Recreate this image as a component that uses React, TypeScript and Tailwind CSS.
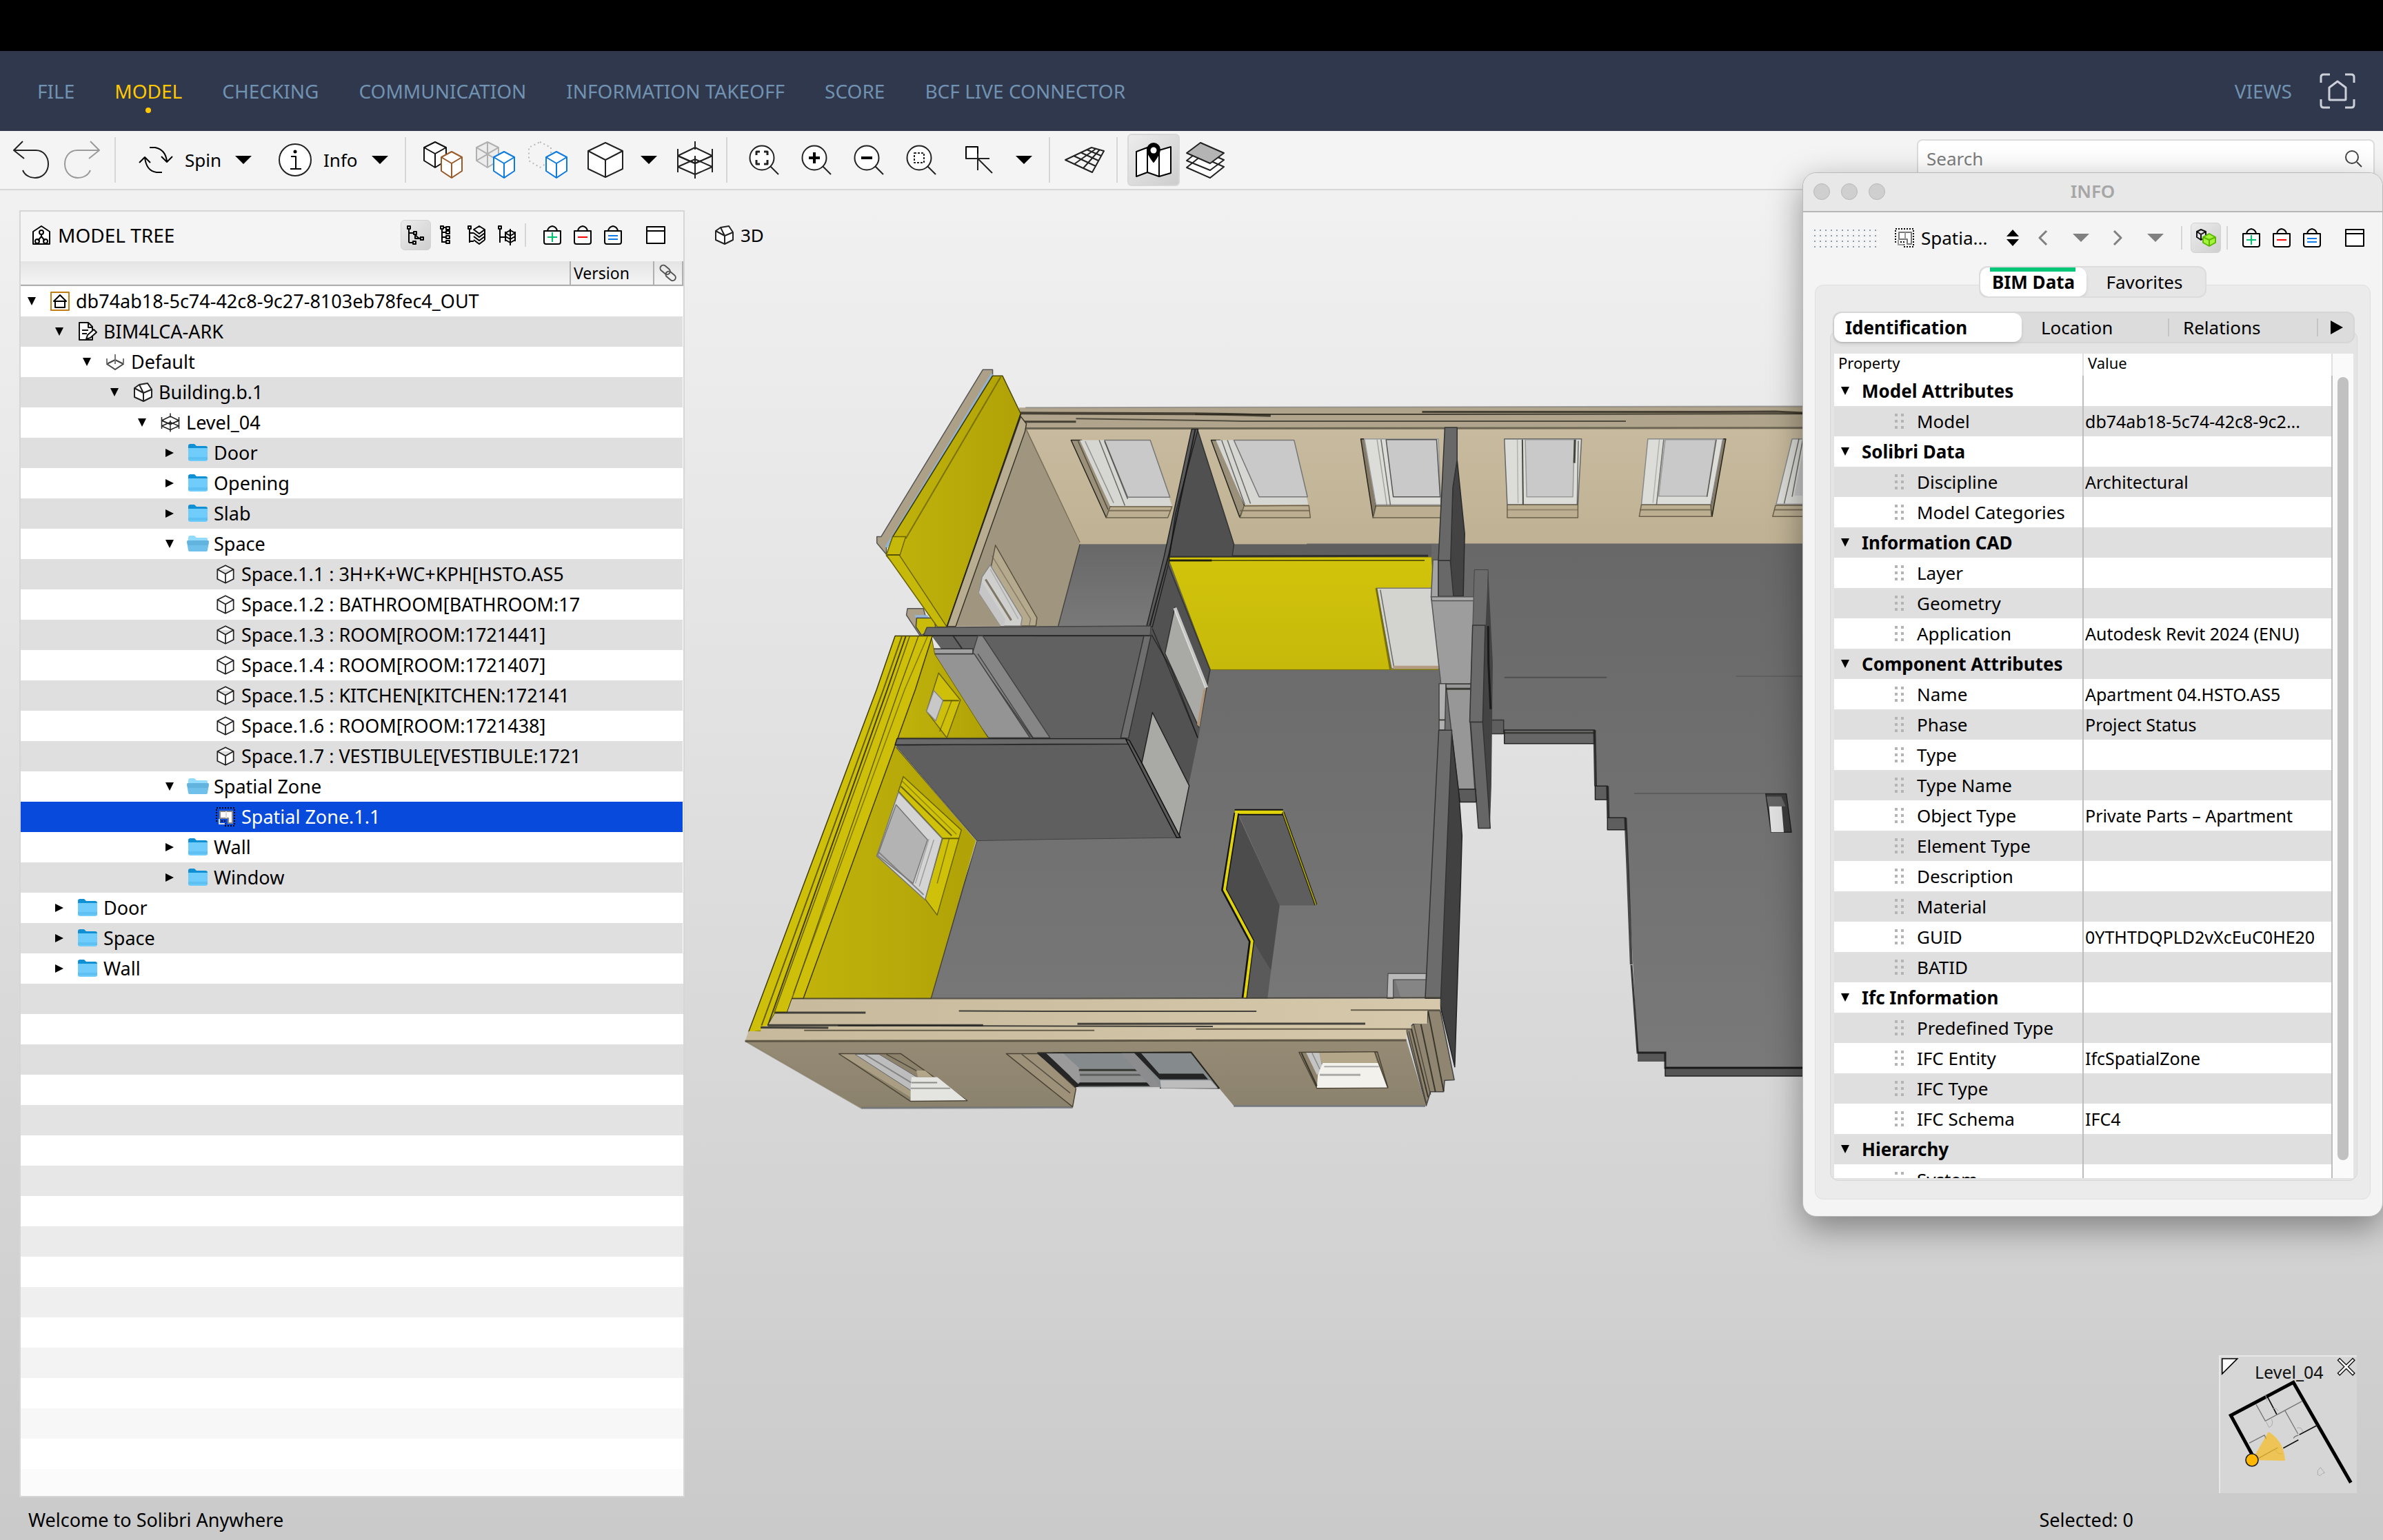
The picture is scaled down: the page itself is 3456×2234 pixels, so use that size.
import React from "react";

type Kids = { children?: React.ReactNode };

/* ---------- icons ---------- */

function Svg({ box, className, color = "#111", sw = 2, children }: Kids & { box: string; className: string; color?: string; sw?: number }) {
  return (
    <svg viewBox={box} className={"shrink-0 " + className} fill="none" stroke={color} strokeWidth={sw} strokeLinejoin="round" aria-hidden="true">
      {children}
    </svg>
  );
}

const Caret = ({ className = "h-3 w-6", color = "#000" }: { className?: string; color?: string }) => (
  <svg viewBox="0 0 24 12" className={"shrink-0 " + className} aria-hidden="true">
    <path d="M0 0h24L12 12z" fill={color} />
  </svg>
);

const Undo = ({ color = "#222" }: { color?: string }) => (
  <Svg box="0 0 54 58" className="h-[58px] w-[54px]" color={color}>
    <path d="M15 2 2 15l15 12M2 15h32c11 0 18 9 18 20s-8 20-19 20c-8 0-15-4-18-11" />
  </Svg>
);

const cube = "M12 1 22 6v12l-10 5L2 18V6zM2 6l10 5.500L22 6M12 11.500V23";

const CubePair = ({ back, front, kind }: { back: string; front: string; kind: "solid" | "wire" | "dots" }) => (
  <Svg box="0 0 58 54" className="h-[54px] w-[58px]" color={back}>
    <path d="M18 1 34 9v19L18 38 2 28V9z" fill={kind === "dots" ? "none" : kind === "wire" ? "#ececec" : "#fff"} strokeDasharray={kind === "dots" ? "2 4" : undefined} />
    {kind === "solid" && <path d="M2 9l16 9 16-9M18 18v20" />}
    {kind === "wire" && <path d="M2 9l32 19M34 9 2 28M18 1v37M2 9l16 9 16-9M2 28l16-9 16 9" />}
    <path d="M42 15 57 23v20L42 53 27 43V23z" fill="#fff" stroke={front} />
    <path d="M27 23l15 9 15-9M42 32v21" stroke={front} />
  </Svg>
);

const LevelIcon = ({ className, sw = 2 }: { className: string; sw?: number }) => (
  <Svg box="0 0 54 56" className={className} color="#222" sw={sw}>
    <path d="M27 10 52 22 27 33 2 22zM27 27 52 38 27 49 2 38z" fill="#fff" />
    <path d="M2 12v34M52 12v34M27 1v12M27 22v33M2 22l25 11 25-11" />
  </Svg>
);

const Zoom = ({ kind }: { kind: "fit" | "in" | "out" | "area" }) => (
  <Svg box="0 0 46 46" className="h-[46px] w-[46px]" color="#222">
    <circle cx="20" cy="20" r="17.500" fill="#fff" />
    <path d="M32 32l12 12" />
    {kind === "fit" && <path d="M12 16v-5h5M23 11h5v5M28 23v6h-5M17 29h-5v-6" strokeWidth="3" />}
    {kind === "in" && <path d="M12 20h16M20 12v16" strokeWidth="4" stroke="#000" />}
    {kind === "out" && <path d="M12 20h16" strokeWidth="4" stroke="#000" />}
    {kind === "area" && <path d="M13 13h14v14H13z" strokeWidth="2" strokeDasharray="3 2" />}
  </Svg>
);

const Basket = ({ kind }: { kind: "add" | "remove" | "set" }) => (
  <Svg box="0 0 28 30" className="h-[30px] w-7" color="#000">
    <path d="M2 9h24v16q0 3-3 3H5q-3 0-3-3z" fill="#fff" />
    <path d="M7 9q1-6 7-7 6 1 7 7" />
    {kind === "add" && <path d="M7 18h14M14 11v14" stroke="#00c371" />}
    {kind === "remove" && <path d="M7 18h14" stroke="#f00" />}
    {kind === "set" && <path d="M7 16h14M7 21h14" stroke="#0d7ae6" />}
  </Svg>
);

const PanelIcon = () => (
  <Svg box="0 0 28 28" className="h-7 w-7" color="#000">
    <path d="M1 2h26v24H1z" fill="#fff" />
    <path d="M1 8h26" />
  </Svg>
);

const ZoneIcon = ({ selected }: { selected?: boolean }) => (
  <Svg box="0 0 28 28" className="h-7 w-7" color="#000">
    <path d="M1 1h26v26H13v-7H1z" strokeDasharray="2 2" strokeWidth="2" />
    <path d="M6 6h18v17h-6v-7H6z" stroke={selected ? "#888" : "#777"} fill="#fff" />
    <path d="M15 6v10M5 17v7h8" stroke={selected ? "#ddd" : "#999"} />
  </Svg>
);

const HouseCubeIcon = () => (
  <Svg box="0 0 28 28" className="h-7 w-7" color="#222">
    <path d="M2 8 9 3l12-2 6 9v11l-12 6-13-6z" fill="#fff" />
    <path d="M2 8l13 7 12-5M15 15v12M9 3l6 12" />
  </Svg>
);

const Folder = ({ open }: { open?: boolean }) =>
  open ? (
    <svg viewBox="0 0 32 26" className="h-[26px] w-8 shrink-0" aria-hidden="true">
      <path d="M2 4q0-3 3-3h6l3 3h14q2 0 2 2v10H2z" fill="#93dcff" />
      <path d="M0 10q0-2 2-2h28q2 0 2 2l-2 12q0 2-3 2H5q-3 0-3-2z" fill="#6fc0ea" />
      <path d="M0 10q0-2 2-2h28q2 0 2 2l-1 5H1z" fill="#58a9d6" opacity=".55" />
    </svg>
  ) : (
    <svg viewBox="0 0 30 28" className="h-7 w-[30px] shrink-0" aria-hidden="true">
      <path d="M1 4q0-3 3-3h6l3 3h13q3 0 3 3v10H1z" fill="#0f8fd4" />
      <path d="M1 7h28v16q0 3-3 3H4q-3 0-3-3z" fill="#70cdfb" />
      <path d="M1 21h28M1 23h28" stroke="#4fb3ea" />
    </svg>
  );

const TreeIcon = ({ kind }: { kind: number }) => (
  <Svg box="0 0 28 30" className="h-[30px] w-7" color="#000">
    <path d="M2 2h4v4H2zM4 6v20" />
    {kind === 0 && <path d="M4 12h7M4 26h6M11 10h4v4h-4zM10 24h4v4h-4zM13 14v6h9M20 18h5v4h-5M13 14q4 6 9 6" />}
    {kind === 1 && <path d="M4 11h6M4 18h6M4 25h6M10 3h5v4h-5zM10 9h5v4h-5zM10 16h5v4h-5zM10 23h5v4h-5zM6 4h4" />}
    {kind === 2 && <path d="M4 12h6M4 24h6M18 2l8 5-8 6-8-6zM10 12l8 6 8-6M10 17l8 6 8-6M10 22l8 6 8-6M26 7v15" />}
    {kind === 3 && <path d="M4 18h7M12 12l7-4 7 4-7 4zM12 17l7 4 7-4M12 22l7 4 7-4M12 10v14M26 10v14M19 6v24" />}
  </Svg>
);

const ModelTreeIcon = () => (
  <Svg box="0 0 28 30" className="h-[30px] w-7" color="#000">
    <path d="M2 10 14 2l12 8v18H2z" fill="#fff" />
    <circle cx="14" cy="11" r="3" />
    <path d="M14 14v4M9 23l5-6 5 6" />
    <circle cx="8" cy="24" r="3" />
    <circle cx="20" cy="24" r="3" />
  </Svg>
);

type IconName = "root" | "doc" | "site" | "building" | "level" | "folder" | "open" | "space" | "zone";

function NodeIcon({ name }: { name: IconName }) {
  switch (name) {
    case "root":
      return (
        <Svg box="0 0 28 28" className="h-7 w-7" color="#000">
          <path d="M1 1h26v26H1z" stroke="#c47d14" fill="#fff" />
          <path d="M5 14l9-9 9 9zM7 14v9h14v-9" />
        </Svg>
      );
    case "doc":
      return (
        <Svg box="0 0 28 28" className="h-7 w-7" color="#111">
          <path d="M2 1h13l6 6v19H2z" fill="#fff" />
          <path d="M15 1v7h6M6 12h9M6 17h7" />
          <path d="M12 25l2-6 9-8 4 4-9 8z" fill="#fff" />
        </Svg>
      );
    case "site":
      return (
        <Svg box="0 0 28 28" className="h-7 w-7" color="#444">
          <path d="M2 17l12-6 12 6-12 8z" fill="#fff" />
          <path d="M2 9v8M26 9v8M14 3v14" stroke="#777" />
        </Svg>
      );
    case "building":
      return <HouseCubeIcon />;
    case "level":
      return <LevelIcon className="h-7 w-7" sw={3} />;
    case "space":
      return (
        <Svg box="0 0 24 24" className="h-7 w-7" color="#222" sw={1.5}>
          <path d={cube} fill="#fff" />
        </Svg>
      );
    case "zone":
      return <ZoneIcon selected />;
    default:
      return <Folder open={name === "open"} />;
  }
}

/* ---------- top navigation ---------- */

const NAV = ["FILE", "MODEL", "CHECKING", "COMMUNICATION", "INFORMATION TAKEOFF", "SCORE", "BCF LIVE CONNECTOR"];

function NavBar() {
  return (
    <nav className="flex h-[116px] items-center bg-[#30384d] pr-10 pl-[54px] text-[28px] text-[#7192b1]">
      <div className="flex gap-[58px]">
        {NAV.map((n) => (
          <button key={n} className={n === "MODEL" ? "relative text-[#ffc800]" : "relative"}>
            {n}
            {n === "MODEL" && <span className="absolute top-[45px] left-1/2 size-2 -translate-x-1/2 rounded-full bg-[#ffc800]" />}
          </button>
        ))}
      </div>
      <button className="ml-auto">VIEWS</button>
      <button aria-label="Home view" className="ml-10">
        <Svg box="0 0 52 52" className="size-[52px]" color="#ccd0d8" sw={3}>
          <path d="M2 14V6q0-4 4-4h9M37 2h9q4 0 4 4v8M50 38v8q0 4-4 4h-9M15 50H6q-4 0-4-4v-8" />
          <path d="M26 12 38 21v17q0 1-1 1H15q-1 0-1-1V21z" />
        </Svg>
      </button>
    </nav>
  );
}

/* ---------- toolbar ---------- */

const Sep = ({ className = "" }: { className?: string }) => <span className={"h-[66px] w-0.5 bg-[#d6d6d6] " + className} />;

function Toolbar() {
  return (
    <div className="flex h-[86px] items-start border-b-2 border-[#d6d6d6] bg-[#f4f4f4]">
      <div className="flex h-[84px] flex-1 items-center pl-[18px] text-[26px] text-black">
        <button aria-label="Undo"><Undo /></button>
        <button aria-label="Redo" className="ml-5 -scale-x-100"><Undo color="#9a9a9a" /></button>
        <Sep className="ml-5" />
        <button className="ml-8 flex items-center gap-4">
          <Svg box="0 0 52 40" className="h-10 w-[52px]" color="#000">
            <path d="M17 2h8q15 3 17 20M34 15l8 8 8-8M35 38h-8Q12 36 10 16M2 24l8-8 8 8" />
          </Svg>
          Spin
        </button>
        <button aria-label="Spin options" className="ml-5"><Caret /></button>
        <button className="ml-[38px] flex items-center gap-4">
          <Svg box="0 0 50 50" className="size-[50px]" color="#222">
            <circle cx="25" cy="25" r="23" fill="#fff" />
            <path d="M19 20h7v17M18 38h16" stroke="#000" />
            <circle cx="25" cy="13" r="2.500" fill="#000" stroke="none" />
          </Svg>
          Info
        </button>
        <button aria-label="Info options" className="ml-5"><Caret /></button>
        <Sep className="ml-6" />
        <div className="ml-6 flex items-center gap-[18px]">
          <button aria-label="Show all"><CubePair back="#111" front="#9a5b2a" kind="solid" /></button>
          <button aria-label="Transparent"><CubePair back="#b0b0b0" front="#0d7be0" kind="wire" /></button>
          <button aria-label="Hide others"><CubePair back="#b8b8b8" front="#0d7be0" kind="dots" /></button>
          <button aria-label="Box view" className="ml-[10px]">
            <Svg box="0 0 54 54" className="size-[54px]" color="#222">
              <path d="M27 2 52 14v26L27 52 2 40V14z" fill="#fff" />
              <path d="M2 14l25 13 25-13M27 27v25" />
            </Svg>
          </button>
        </div>
        <button aria-label="Box view options" className="ml-6"><Caret /></button>
        <button aria-label="Floors" className="ml-7"><LevelIcon className="h-14 w-[54px]" /></button>
        <Sep className="ml-[18px]" />
        <div className="ml-[30px] flex items-center gap-[30px]">
          <button aria-label="Zoom to fit"><Zoom kind="fit" /></button>
          <button aria-label="Zoom in"><Zoom kind="in" /></button>
          <button aria-label="Zoom out"><Zoom kind="out" /></button>
          <button aria-label="Zoom area"><Zoom kind="area" /></button>
        </div>
        <button aria-label="Select" className="ml-10">
          <Svg box="0 0 42 42" className="size-[42px]" color="#000">
            <path d="M2 2h17v17H2z" fill="#fff" />
            <path d="M2 19h34M19 12v24M19 19l21 21" stroke="#222" />
          </Svg>
        </button>
        <button aria-label="Select options" className="ml-8"><Caret /></button>
        <Sep className="ml-6" />
        <button aria-label="Grid" className="ml-5">
          <Svg box="0 0 60 40" className="h-10 w-[60px]" color="#222">
            <path d="M2 20 40 2l18 5L41 38zM15 26 46 4M28 32 52 5M14 14l32 15M24 9l26 12M33 5l21 9" />
          </Svg>
        </button>
        <Sep className="ml-4" />
        <button aria-label="Map" className="ml-[14px] flex h-[76px] w-[76px] items-center justify-center rounded-md border-2 border-[#d8d8d8] bg-gradient-to-br from-[#ececec] to-[#cdcdcd]">
          <Svg box="0 0 54 52" className="h-[52px] w-[54px]" color="#000">
            <path d="M2 14 18 8v36L2 50zM18 8l17 4v38l-17-6zM35 12 52 7v38l-17 5z" fill="#fff" />
            <path d="M27 29q-9-12-9-18a9 9 0 0 1 18 0q0 6-9 18z" fill="#000" />
            <circle cx="27" cy="12" r="4.500" fill="#fff" stroke="none" />
          </Svg>
        </button>
        <button aria-label="Layers" className="ml-2">
          <Svg box="0 0 58 54" className="h-[54px] w-[58px]" color="#222">
            <path d="M22 22 56 37 36 53 2 38zM22 12 56 27 36 42 2 28z" fill="#fff" />
            <path d="M22 2 56 17 36 32 2 17z" fill="#b4b4b4" />
          </Svg>
        </button>
      </div>
      <label className="mt-3 mr-3 flex h-14 w-[664px] items-center rounded-lg border-2 border-[#dcdcdc] bg-white px-3">
        <input aria-label="Search" placeholder="Search" className="flex-1 bg-transparent text-[26px] text-black outline-none placeholder:text-[#7d7d7d]" />
        <Svg box="0 0 26 26" className="mr-1 size-[26px]" color="#444">
          <circle cx="11" cy="11" r="9" />
          <path d="M18 18l7 7" />
        </Svg>
      </label>
    </div>
  );
}

/* ---------- model tree ---------- */

type Node = { label: string; level: number; icon: IconName; state?: "open" | "closed" };

const NODES: Node[] = [
  { label: "db74ab18-5c74-42c8-9c27-8103eb78fec4_OUT", level: 0, icon: "root", state: "open" },
  { label: "BIM4LCA-ARK", level: 1, icon: "doc", state: "open" },
  { label: "Default", level: 2, icon: "site", state: "open" },
  { label: "Building.b.1", level: 3, icon: "building", state: "open" },
  { label: "Level_04", level: 4, icon: "level", state: "open" },
  { label: "Door", level: 5, icon: "folder", state: "closed" },
  { label: "Opening", level: 5, icon: "folder", state: "closed" },
  { label: "Slab", level: 5, icon: "folder", state: "closed" },
  { label: "Space", level: 5, icon: "open", state: "open" },
  { label: "Space.1.1 : 3H+K+WC+KPH[HSTO.AS5", level: 6, icon: "space" },
  { label: "Space.1.2 : BATHROOM[BATHROOM:17", level: 6, icon: "space" },
  { label: "Space.1.3 : ROOM[ROOM:1721441]", level: 6, icon: "space" },
  { label: "Space.1.4 : ROOM[ROOM:1721407]", level: 6, icon: "space" },
  { label: "Space.1.5 : KITCHEN[KITCHEN:172141", level: 6, icon: "space" },
  { label: "Space.1.6 : ROOM[ROOM:1721438]", level: 6, icon: "space" },
  { label: "Space.1.7 : VESTIBULE[VESTIBULE:1721", level: 6, icon: "space" },
  { label: "Spatial Zone", level: 5, icon: "open", state: "open" },
  { label: "Spatial Zone.1.1", level: 6, icon: "zone" },
  { label: "Wall", level: 5, icon: "folder", state: "closed" },
  { label: "Window", level: 5, icon: "folder", state: "closed" },
  { label: "Door", level: 1, icon: "folder", state: "closed" },
  { label: "Space", level: 1, icon: "folder", state: "closed" },
  { label: "Wall", level: 1, icon: "folder", state: "closed" },
];

const INDENT = ["pl-[10px]", "pl-[50px]", "pl-[90px]", "pl-[130px]", "pl-[170px]", "pl-[210px]", "pl-[250px]"];

const EMPTY = [
  "bg-[#dfdfdf]", "bg-white", "bg-[#dfdfdf]", "bg-white", "bg-[#e3e3e3]", "bg-white", "bg-[#e7e7e7]", "bg-white",
  "bg-[#ebebeb]", "bg-white", "bg-[#efefef]", "bg-white", "bg-[#f3f3f3]", "bg-white", "bg-[#f7f7f7]", "bg-white", "bg-[#fbfbfb]",
];

const Twisty = ({ open }: { open: boolean }) => (
  <svg viewBox="0 0 12 12" className="size-3" aria-hidden="true">
    <path d={open ? "M0 0h12L6 12z" : "M0 0l12 6-12 6z"} />
  </svg>
);

function ModelTree() {
  return (
    <section className="flex w-[965px] shrink-0 flex-col overflow-hidden border-2 border-[#d6d6d6] bg-white">
      <header className="flex h-[72px] shrink-0 items-center bg-[#f4f4f4] pr-[26px] pb-1 pl-4 text-[28px]">
        <ModelTreeIcon />
        <h2 className="ml-[10px]">MODEL TREE</h2>
        <div className="ml-auto flex items-center">
          <button aria-label="Spatial hierarchy" className="flex h-11 w-11 items-center justify-center rounded-md border border-[#d2d2d2] bg-gradient-to-br from-[#ececec] to-[#cfcfcf]"><TreeIcon kind={0} /></button>
          <button aria-label="Component hierarchy" className="ml-3"><TreeIcon kind={1} /></button>
          <button aria-label="Layer hierarchy" className="ml-3"><TreeIcon kind={2} /></button>
          <button aria-label="System hierarchy" className="ml-4"><TreeIcon kind={3} /></button>
          <span className="mr-6 ml-3 h-[34px] w-0.5 bg-[#d6d6d6]" />
          <button aria-label="Add to basket"><Basket kind="add" /></button>
          <button aria-label="Remove from basket" className="ml-4"><Basket kind="remove" /></button>
          <button aria-label="Set basket" className="ml-4"><Basket kind="set" /></button>
          <button aria-label="Maximize" className="ml-[34px]"><PanelIcon /></button>
        </div>
      </header>
      <table className="w-full table-fixed border-collapse">
        <colgroup>
          <col />
          <col className="w-[121px]" />
          <col className="w-[42px]" />
        </colgroup>
        <thead>
          <tr className="h-[35px] border-b-2 border-[#b0b0b0] bg-gradient-to-b from-[#e4e4e4] to-[#f5f5f5] text-left text-[23px] leading-[32px]">
            <th className="p-0" aria-label="Name" />
            <th className="border-l-2 border-[#b0b0b0] p-0 pl-1 font-normal">Version</th>
            <th className="border-x-2 border-[#b0b0b0] p-0" aria-label="Link">
              <Svg box="0 0 26 26" className="mx-auto size-[26px]" color="#555">
                <rect x="1" y="4" width="16" height="9" rx="4.500" transform="rotate(40 9 8)" />
                <rect x="9" y="13" width="16" height="9" rx="4.500" transform="rotate(40 17 17)" />
              </Svg>
            </th>
          </tr>
        </thead>
        <tbody className="text-[27px] whitespace-nowrap">
          {NODES.map((n, i) => {
            const selected = n.icon === "zone";
            const bg = selected ? "h-11 bg-[#084bdc] text-white" : i % 2 ? "h-11 bg-[#dfdfdf]" : "h-11 bg-white";
            return (
              <tr key={i} className={bg}>
                <td className={"p-0 " + INDENT[n.level]}>
                  <div className="flex h-11 items-center">
                    {n.state ? (
                      <button aria-label={n.state === "open" ? "Collapse" : "Expand"} className="w-8 shrink-0"><Twisty open={n.state === "open"} /></button>
                    ) : (
                      <span className="w-8 shrink-0" />
                    )}
                    <span className="flex w-[30px] shrink-0 justify-center"><NodeIcon name={n.icon} /></span>
                    <span className="ml-2 leading-[40px]">{n.label}</span>
                  </div>
                </td>
                <td className="p-0" />
                <td className="p-0" />
              </tr>
            );
          })}
        </tbody>
      </table>
      {EMPTY.map((c, i) => (
        <div key={i} className={"h-11 shrink-0 " + c} />
      ))}
    </section>
  );
}

/* ---------- 3D scene ---------- */

const EDGE = "#26241c";

function P({ d, f, e, w = 1.5 }: { d: string; f: string; e?: string; w?: number }) {
  return <polygon points={d} fill={f} stroke={e ?? "none"} strokeWidth={w} vectorEffect="non-scaling-stroke" strokeLinejoin="round" />;
}
function L({ d, c = EDGE, w = 2, thin, o = 0.8 }: { d: string; c?: string; w?: number; thin?: boolean; o?: number }) {
  return <polyline points={d} fill="none" stroke={c} strokeWidth={thin ? 1.5 : w} opacity={thin ? o * 0.75 : o} vectorEffect="non-scaling-stroke" />;
}

function Scene() {
  return (
    <svg viewBox="990 276 1624 1506" className="absolute top-0 left-0 h-[1506px] w-[1624px]" role="img" aria-label="3D model of an apartment on Level_04">
      <defs>
        <linearGradient id="floor" x1="0" y1="0" x2="0" y2="1">
          <stop offset="0" stopColor="#686868" />
          <stop offset="1" stopColor="#797979" />
        </linearGradient>
        <linearGradient id="back" x1="0" y1="0" x2="0" y2="1">
          <stop offset="0" stopColor="#c7ba9e" />
          <stop offset="1" stopColor="#bfb294" />
        </linearGradient>
        <linearGradient id="yin" x1="0" y1="0" x2="1" y2="0">
          <stop offset="0" stopColor="#c1b30b" />
          <stop offset="1" stopColor="#b0a207" />
        </linearGradient>
        <linearGradient id="ymid" x1="0" y1="0" x2="0" y2="1">
          <stop offset="0" stopColor="#d2c40b" />
          <stop offset="1" stopColor="#c6b90a" />
        </linearGradient>
        <linearGradient id="face" x1="0" y1="0" x2="0" y2="1">
          <stop offset="0" stopColor="#968b75" />
          <stop offset="1" stopColor="#8b826d" />
        </linearGradient>
        <linearGradient id="corn" x1="0" y1="0" x2="1" y2="0">
          <stop offset="0" stopColor="#c6b99c" />
          <stop offset="1" stopColor="#d6c9ab" />
        </linearGradient>
      </defs>

      {/* slabs */}
      <polygon fill="url(#floor)" points="1540,786 2614,786 2614,1549 2414,1549 2414,1527 2374,1527 2360,1260 2357,1204 2330,1204 2330,1160 2312,1160 2311,1079 2180,1079 2180,1064 2162,1064 2150,1064 2114,1145 2100,1160 2090,1448 1340,1448 1410,1240" />
      <P f="#575757" d="2374,1527 2414,1527 2414,1540 2374,1540" />
      <P f="#555" e="#222" d="2414,1549 2614,1549 2614,1561 2414,1561" />
      <L d="2365,1400 2374,1527 2414,1527 2414,1549 2614,1549" c="#111" w={3} />

      {/* rear wall and right side of the model */}
      <g transform="translate(1800 560) scale(0.52296 0.44643)">
        <P f="url(#back)" d="-612,136 1568,136 1568,512 180,512 180,514 -560,514" />
        <P f="#b0a58c" d="-618,70 1568,66 1568,136 -612,140" />
        <L d="-615,88 -130,90 0,93 80,96" c="#2b271d" w={4} />
        <L d="-130,92 410,92 1568,90" c="#2b271d" w={2} />
        <L d="500,84 1300,84 1480,83 1568,88" c="#2b271d" w={3} />
        <L d="-615,116 -460,116" c="#2b271d" w={3} />
        <L d="-460,106 0,114 1065,114" c="#3a352a" w={2} />
        <L d="-600,138 1568,136" c="#5c5545" w={3} />
        <L d="-600,70 1568,66" c="#777" w={2} o={0.6} />

        <P f="#9b907a" e={EDGE} d="-85,176 -60,176 8,392 -6,426" />
        <P f="#d6d6d2" d="-72,176 145,176 184,385 6,385" />
        <P f="#c9c9ca" e="#777" d="-22,176 145,176 182,360 48,360" />
        <L d="-40,176 24,382" thin /><L d="-56,176 8,385" thin />
        <P f="#bbae91" e="#6b614c" d="6,390 186,388 190,428 -5,428" /><L d="-5,405 188,405" c="#6b614c" />

        <P f="#857b67" e={EDGE} d="330,172 345,172 372,388 364,428" />
        <P f="#dcdcd8" e="#999" d="340,172 545,172 552,386 372,386" />
        <P f="#c9c9ca" e="#555" d="400,174 540,174 550,360 420,360" />
        <L d="375,174 402,386" o={0.4} thin /><L d="386,174 412,386" thin />
        <P f="#bbae91" e="#6b614c" d="372,390 553,390 553,428 364,428" />

        <P f="#dcdcd8" e="#666" d="728,172 942,172 932,386 736,386" />
        <P f="#c9c9ca" e="#999" d="786,174 922,174 918,360 790,360" />
        <L d="778,174 780,386" w={2} /><L d="764,174 766,380" o={0.3} thin /><L d="924,174 922,250" w={3} /><L d="933,178 930,386" thin />
        <P f="#bbae91" e="#6b614c" d="736,386 932,386 932,428 736,428" /><L d="736,402 932,402" c="#6b614c" o={0.5} />

        <P f="#857b67" e={EDGE} d="1330,172 1342,172 1304,424 1300,390" />
        <P f="#dcdcd8" e="#888" d="1126,172 1334,172 1300,386 1108,386" />
        <P f="#c9c9ca" e="#999" d="1174,174 1314,174 1290,358 1156,358" />
        <L d="1170,174 1150,386" thin /><L d="1158,174 1140,380" o={0.3} thin /><L d="1316,174 1290,360" thin />
        <P f="#bbae91" e="#6b614c" d="1108,386 1300,386 1302,424 1102,424" /><L d="1104,402 1300,402" c="#6b614c" />

        <P f="#dcdcd8" e="#888" d="1526,172 1568,172 1568,384 1482,384" />
        <P f="#c9c9ca" d="1560,190 1568,190 1568,356 1532,356" />
        <L d="1545,172 1504,382" thin /><L d="1556,172 1526,360" thin />
        <P f="#bbae91" e="#6b614c" d="1480,388 1568,388 1568,424 1472,424" /><L d="1476,402 1568,402" c="#6b614c" />

        {/* slab edges and opening */}
        <P f="#5e5e5e" e="#333" d="692,1085 726,1085 726,1130 692,1130" />
        <P f="#666" e="#222" d="728,1118 978,1118 978,1162 728,1162" /><L d="728,1127 978,1127" />
        <P f="#5e5e5e" e="#222" d="980,1300 1014,1300 1014,1344 980,1344" />
        <P f="#5e5e5e" e="#222" d="1014,1403 1064,1403 1064,1442 1014,1442" />
        <L d="978,1118 981,1300" c="#222" w={4} /><L d="1014,1300 1016,1403" c="#222" w={4} />
        <L d="1064,1403 1070,1568 1080,1880" c="#222" w={4} />
        <L d="728,947 1012,947" c="#444" o={0.7} /><L d="1088,1324 1453,1324" c="#555" o={0.7} /><L d="1370,943 1568,943" c="#555" o={0.5} />
        <P f="#3c3c3c" e="#222" d="1453,1325 1510,1325 1524,1450 1468,1450" />
        <P f="#636363" d="1455,1334 1496,1334 1508,1366 1460,1366" />
        <P f="#e0e0e0" d="1462,1366 1497,1366 1503,1450 1468,1450" />
      </g>

      {/* inner yellow wall */}
      <g transform="translate(1060 500) scale(0.5102 0.38267)">
        <P f="#5f5f5f" d="1240,757 1990,757 1990,802 1240,802" />
        <P f="url(#ymid)" e="#777010" w={1} d="1240,805 1990,805 2010,1232 1360,1232" />
        <L d="1240,803 1980,800" c="#222" w={3} />
        <L d="1240,818 1568,818 1970,818" c="#4a4500" w={2} />
        <L d="1240,818 1365,818" c="#111" w={3} />
      </g>
      <g transform="translate(1800 560) scale(0.52296 0.44643)">
        <P f="#d3d3cf" e="#777" d="373,657 530,657 548,918 415,918" />
        <L d="373,657 412,920" c="#6b6400" w={3} /><L d="384,662 422,915" thin /><P f="#b39a80" d="420,909 547,909 547,919 420,919" />
        <P f="#a5a5a5" e="#555" d="530,565 545,565 545,685 525,685" />
        <P f="#6b6b6b" e="#444" w={1} d="645,597 683,597 681,780 640,780" />
        <P f="#434343" d="683,600 696,900 692,1300 688,1434 668,1090 676,780" />
        <P f="#434343" e="#2a2a2a" d="597,240 618,480 614,683 585,683 578,570 585,330" />
        <P f="#686868" e="#333" d="563,135 597,135 597,240 585,330 579,567 545,567" />
        <P f="#686868" e="#333" d="545,567 578,567 587,684 545,684" />
        <P f="#9d9d9d" e="#555" d="525,685 643,685 636,967 552,967" /><P f="#aaa" e="#555" d="525,685 643,685 643,698 527,698" />
        <P f="#b0b0b0" e="#444" d="547,967 566,967 563,1118 547,1118" /><L d="547,1085 563,1085" />
        <P f="#979797" e="#444" d="566,968 636,968 633,1090 646,1310 600,1310 575,1060" /><L d="566,984 634,984" w={3} />
        <P f="#6b6b6b" e="#333" d="640,777 675,777 668,1092 632,1092" />
        <P f="#666" e="#333" d="634,1092 668,1092 689,1437 656,1437" />
        <P f="#5b5b5b" e="#222" d="600,1310 648,1310 650,1352 605,1352" />
        <L d="683,780 684,900 690,1050" c="#111" w={3} />
      </g>

      {/* upper left rooms */}
      <g transform="translate(1060 500) scale(0.5102 0.38267)">
        <P f="#aca188" e="#555" d="714,95 742,95 742,115 440,770 440,795 413,752 413,728 425,728" />
        <L d="741,112 440,768" c="#8fb4da" w={4} o={1} />
        <P f="#aca188" e="#555" d="500,1000 545,1000 560,1070 535,1102 497,1025" /><P f="#93b6da" d="520,1025 556,1025 562,1036 524,1036" />
        <P f="#c9bc0b" e="#444" d="526,1036 575,1036 580,1072 540,1102 524,1070" />
        <P f="url(#yin)" e="#4d4700" d="742,118 770,118 822,262 612,1070 440,800 458,728" />
        <P f="#c7b90a" e="#6b6400" d="458,728 495,728 478,800 612,1070 585,1070 440,797" /><L d="765,122 495,735" c="#6b6400" /><L d="442,797 478,797" c="#3f3a00" />
        <L d="742,118 458,728" c="#3f3a00" thin />

        <P f="#a0957e" d="838,322 990,757 928,1068 630,1068" />
        <P f="#b8ac91" e="#3a352a" d="822,272 838,300 834,330 637,1068 612,1068" />
        <L d="838,322 990,750" c="#4b4434" thin /><L d="822,262 612,1070" c="#222" w={2} />
        <P f="url(#floor)" d="990,757 1250,757 1190,1068 928,1068" /><L d="990,757 928,1068" c="#222" thin />
        <P f="#b5a98e" e="#5c5443" d="750,760 868,1035 865,1066 765,1066 735,860" />
        <L d="740,800 850,1040 846,1066" c="#6b614c" thin />
        <P f="#cfcfce" e="#888" d="735,835 826,1035 822,1066 765,1066 703,940 712,880" />
        <P f="#c6c6c6" d="712,900 778,1040 775,1066 765,1066 703,940" /><L d="722,890 795,1045" c="#6b614c" w={3} /><L d="735,850 815,1040" c="#999" thin />

        <P f="#9b907a" e={EDGE} d="965,362 995,362 1078,612 1065,656" />
        <P f="#d6d6d2" d="990,362 1190,362 1252,612 1076,612" />
        <P f="#c9c9ca" e="#777" d="1060,362 1190,362 1246,578 1126,578" />
        <L d="1045,362 1118,610" thin /><L d="1060,366 1126,585" thin /><L d="1005,366 1086,600" thin o={0.5} /><L d="985,366 1070,625" thin />
        <P f="#bbae91" e="#6b614c" d="1076,614 1252,614 1240,656 1065,656" /><L d="1070,629 1248,629" c="#6b614c" />

        <P f="#505050" e="#333" d="1324,320 1428,757 1423,803 1240,803 1250,700" />
        <P f="#525252" d="1242,830 1360,1232 1327,1490 1299,1669 1272,1868 1128,1490 1190,1070" />
        <P f="#5a5a5a" e="#222" d="1308,320 1326,320 1262,640 1242,830 1196,1070 1180,1066 1230,800" /><L d="1318,322 1244,790 1188,1070" c="#111" w={2} />
        <L d="1240,830 1360,1232 1350,1300" c="#333" />
        <P f="#a9a9a6" e="#333" d="1260,995 1350,1300 1328,1450 1232,1170" /><L d="1260,998 1350,1300" c="#e8e8e6" w={5} /><P f="#b09678" d="1341,1310 1349,1300 1330,1450 1323,1440" />
        <L d="1196,1076 1325,1490" c="#111" thin /><L d="1194,1100 1250,1230 1325,1490" c="#111" thin />

        <P f="#696969" e="#444" d="555,1072 1192,1066 1190,1104 545,1104" /><L d="545,1104 1190,1104" c="#222" w={3} />
        <P f="#616161" d="570,1106 1172,1106 1110,1490 730,1490 600,1160" />
        <P f="#6e6e6e" e="#333" d="1172,1104 1192,1104 1128,1492 1106,1490" />
        <L d="630,1104 655,1152" c="#222" />
        <P f="#868686" e="#444" d="700,1104 714,1104 905,1490 855,1490 685,1168" />
        <P f="#949494" e="#444" d="560,1172 690,1172 848,1490 730,1490" /><P f="#a0a0a0" e="#333" d="556,1153 686,1153 686,1172 556,1172" />
        <L d="700,1172 857,1490" c="#222" thin />
      </g>

      {/* lower left rooms */}
      <g transform="translate(1060 1000) scale(0.70153 0.40816)">
        <P f="url(#yin)" e="#6b6400" w={1} d="413,-190 420,-125 530,172 340,172 375,0" />
        <P f="url(#yin)" d="338,200 505,538 412,1100 148,1100" /><L d="340,205 507,538 412,1100" c="#222" thin />
        <P f="#cdbf0a" e="#3f3a00" d="338,-190 415,-190 380,0 338,200 148,1100 125,1100 115,1148 90,1150 75,1195 62,1215 35,1218 300,0" />
        <L d="368,-188 330,0 88,1150" c="#221f00" thin /><L d="360,-188 322,0 75,1195" c="#221f00" />
        <L d="386,-188 346,0 115,1148" c="#221f00" thin /><L d="405,-188 358,0 128,1080" c="#4d4700" thin />
        <L d="352,-188 314,0 62,1195" c="#4d4700" />

        <P f="#cdbf0a" e="#6b6400" d="428,-58 473,38 445,172 403,78" />
        <P f="#c8c8c8" e="#888" d="418,4 437,40 422,112 403,78" /><L d="455,40 430,150" c="#4d4700" thin /><L d="437,40 470,40" c="#4d4700" />

        <P f="#cfc10a" e="#6b6400" d="355,310 475,500 470,530 425,802 400,745 436,530 345,362" />
        <L d="350,345 455,520" c="#4d4700" /><L d="352,325 465,515" c="#6b6400" thin /><L d="450,530 425,690" c="#4d4700" thin /><L d="435,530 470,530" c="#4d4700" />
        <P f="#d4d4d4" e="#777" d="345,365 435,530 400,748 300,592 338,400" />
        <P f="#b3b3b3" e="#777" d="340,410 405,535 375,690 302,590" /><L d="305,580 397,730" c="#777" /><L d="418,535 388,700" c="#777" thin /><L d="408,532 380,690" c="#888" thin />

        <P f="#5f5f5f" e="#444" w={1} d="340,200 820,195 925,527 660,533 508,538" />
        <P f="#a9a9a6" e="#222" d="870,82 946,342 925,520 848,262" />
        <P f="#6a6a6a" e="#222" d="342,175 815,175 820,194 338,197" />
        <P f="#5a5a5a" e="#111" d="815,178 822,180 848,262 928,527 920,527" />

        <P f="#5e5e5e" d="1050,450 1140,448 1208,768 1133,768" />
        <P f="#4c4c4c" d="1048,450 1133,768 1115,1000 1078,900 1022,714" />
        <P f="#5a5a5a" d="1080,900 1115,1000 1108,1098 1066,1098" />
        <L d="1040,437 1140,437" c="#111" w={9} o={1} /><L d="1040,437 1140,437" c="#e2d40c" w={5} o={1} />
        <L d="1044,440 1018,712 1075,895 1060,1098" c="#111" w={8} o={1} /><L d="1044,437 1019,712 1076,895 1061,1098" c="#e2d40c" w={4} o={1} />
        <L d="1140,437 1208,766" c="#111" w={4} o={1} /><L d="1140,437 1208,766" c="#a99d08" w={2} o={1} />

        <P f="#b9b9b9" e="#555" d="1357,1010 1436,1010 1436,1032 1368,1032 1368,1098 1355,1098" /><P f="#858585" d="1372,1034 1436,1034 1436,1098 1384,1098" />
        <P f="#414141" e="#222" d="1488,145 1503,360 1510,520 1507,700 1495,1342 1463,1110" />
        <P f="#6c6c6c" e="#333" d="1462,145 1489,145 1466,1100 1434,1098" />

        {/* street facade */}
        <P f="#908570" e="#444" d="1395,1212 1410,1188 1438,1185 1440,1142 1465,1142 1494,1388 1474,1390 1472,1430 1445,1430 1436,1480" />
        <L d="1440,1145 1472,1428" /><L d="1410,1190 1445,1440" thin /><L d="1425,1190 1455,1430" /><L d="1400,1215 1436,1470" thin /><L d="1405,1205 1440,1450" />
        <P f="url(#face)" d="28,1250 1395,1246 1436,1480 1038,1480 1008,1418 712,1418 705,1486 268,1488" />
        <L d="268,1488 705,1486" c="#6c7076" w={3} /><L d="1038,1481 1434,1481" c="#6c7076" w={3} /><L d="28,1250 268,1488" c="#8b826d" />
        <P f="url(#corn)" d="125,1100 1465,1100 1465,1142 1438,1142 1438,1188 1405,1188 1405,1208 1395,1210 1395,1248 28,1250 35,1215 60,1215 62,1198 75,1195 90,1150 115,1148" />
        <L d="125,1099 720,1099 1465,1096" c="#3d392e" w={2} /><L d="90,1149 277,1149" c="#222" w={3} /><L d="470,1143 650,1144 1085,1144" c="#222" w={2} />
        <L d="75,1194 520,1194" c="#222" w={3} /><L d="715,1189 1310,1188" c="#222" w={3} /><L d="60,1202 200,1203" c="#222" w={3} /><L d="220,1195 995,1198" c="#222" w={2} />
        <L d="150,1212 750,1212" c="#4b4434" w={2} /><L d="960,1207 1405,1207" c="#4b4434" w={2} /><L d="28,1250 1395,1247" c="#4b4434" w={3} /><L d="1280,1140 1465,1140" c="#4b4434" />

        <P f="#8d826b" e="#4b4434" d="222,1295 350,1295 487,1462 370,1464" />
        <P f="#a99d84" d="225,1297 255,1297 370,1425 370,1450" />
        <P f="#bdbdbd" e="#666" w={1} d="255,1297 305,1297 385,1380 370,1425" /><L d="275,1297 378,1405" c="#777" /><L d="320,1297 392,1365" thin />
        <P f="#e4e4e0" d="372,1378 425,1378 485,1460 370,1462 370,1420" /><L d="372,1398 425,1398" c="#777" /><L d="370,1418 452,1418" c="#888" /><P f="#b3a689" d="382,1355 400,1355 415,1376 385,1376" />

        <P f="#9d917a" e="#4b4434" d="568,1295 635,1295 712,1418 705,1484" /><L d="600,1297 700,1435" thin />
        <P f="#262626" d="632,1295 670,1290 722,1400 875,1410 712,1414" />
        <P f="#858b8c" e="#222" d="672,1292 950,1290 1008,1418 712,1414" />
        <P f="#262626" d="632,1293 650,1293 720,1408 712,1416" />
        <P f="#9a9a9a" d="650,1293 685,1293 722,1352 722,1397 714,1397" />
        <P f="#8f9090" d="718,1358 850,1358 875,1410 722,1410" /><P f="#202020" d="720,1397 872,1397 872,1410 712,1410" /><L d="718,1353 840,1353" w={3} /><L d="720,1370 855,1370" c="#555" w={3} />
        <P f="#8c8c8e" d="805,1292 835,1292 888,1416 868,1416" /><P f="#242424" d="832,1292 846,1292 884,1366 975,1366 985,1386 885,1386" />
        <P f="#bdbdbd" d="886,1390 990,1390 1005,1418 888,1418" /><L d="712,1416 885,1416" c="#ccc" w={2} o={1} />
        <L d="632,1292 950,1290 1008,1418" />

        <P f="#8d826b" e="#4b4434" d="1173,1290 1335,1288 1357,1416 1210,1418" />
        <P f="#b3a689" d="1215,1292 1328,1290 1335,1328 1220,1328" /><P f="#c4c4c4" d="1188,1292 1215,1292 1222,1350 1210,1370" />
        <P f="#f2f1ec" d="1222,1328 1336,1328 1356,1415 1210,1416 1212,1370" /><L d="1216,1370 1300,1370" c="#999" w={3} /><L d="1225,1341 1338,1341" c="#999" /><L d="1330,1290 1356,1415" thin />
        <L d="1200,1292 1216,1350" c="#666" thin /><L d="1178,1292 1210,1410" />
      </g>
    </svg>
  );
}

/* ---------- minimap ---------- */

function MiniMap() {
  return (
    <aside className="absolute right-[38px] bottom-[68px] size-[200px] border-t-2 border-l-2 border-[#e8e8e8] bg-[#d6d6d6]">
      <svg viewBox="360 204 594 594" className="absolute inset-0 size-full" fill="none" aria-hidden="true">
        <path d="M368 213h66l-66 66z" fill="#fff" stroke="#000" strokeWidth="5" />
        <path d="M874 214l68 68M942 214l-68 68" stroke="#111" strokeWidth="16" />
        <path d="M877 217l62 62M939 217l-62 62" stroke="#fff" strokeWidth="8" />
        <path d="M504 640 406 460l272-144 250 436" stroke="#000" strokeWidth="15" />
        <path d="M566 380l40 76M704 544l80-42M634 602l66-36" stroke="#111" strokeWidth="5" />
        <path d="M516 412l40 72 160-86M642 440l56 100M486 580l66-34 8 16M520 650l90-50M680 560q-2-8 20-14" stroke="#777" strokeWidth="4" />
        <path d="M560 488l12 24 12-8q6-14 0-28M612 440q-8-14-22-10M718 532q0-22-24-18M600 610q10 22 30 16M784 700l12-14 18 24-8 2-12 10-10-4zM556 368l8 30" stroke="#aaa" strokeWidth="3" />
        <path d="M498 654 570 531q68 42 72 126z" fill="#ffb700" fillOpacity=".6" />
        <circle cx="498" cy="654" r="27" fill="#ffb700" stroke="#222" strokeWidth="5" />
      </svg>
      <span className="absolute top-1 left-[50px] text-[25px] leading-9 text-[#111]">Level_04</span>
    </aside>
  );
}

/* ---------- info window ---------- */

type Row = { name: string; value?: string; group?: boolean };

const ROWS: Row[] = [
  { name: "Model Attributes", group: true },
  { name: "Model", value: "db74ab18-5c74-42c8-9c2..." },
  { name: "Solibri Data", group: true },
  { name: "Discipline", value: "Architectural" },
  { name: "Model Categories" },
  { name: "Information CAD", group: true },
  { name: "Layer" },
  { name: "Geometry" },
  { name: "Application", value: "Autodesk Revit 2024 (ENU)" },
  { name: "Component Attributes", group: true },
  { name: "Name", value: "Apartment 04.HSTO.AS5" },
  { name: "Phase", value: "Project Status" },
  { name: "Type" },
  { name: "Type Name" },
  { name: "Object Type", value: "Private Parts – Apartment" },
  { name: "Element Type" },
  { name: "Description" },
  { name: "Material" },
  { name: "GUID", value: "0YTHTDQPLD2vXcEuC0HE20" },
  { name: "BATID" },
  { name: "Ifc Information", group: true },
  { name: "Predefined Type" },
  { name: "IFC Entity", value: "IfcSpatialZone" },
  { name: "IFC Type" },
  { name: "IFC Schema", value: "IFC4" },
  { name: "Hierarchy", group: true },
  { name: "System" },
];

const Grip = () => (
  <svg viewBox="0 0 14 22" className="h-[22px] w-[14px] shrink-0" fill="#b4b4b4" aria-hidden="true">
    {[0, 9, 18].map((y) => (
      <g key={y}>
        <rect x="0" y={y} width="4" height="4" />
        <rect x="9" y={y} width="4" height="4" />
      </g>
    ))}
  </svg>
);

function InfoWindow() {
  return (
    <section className="absolute top-[250px] right-0 flex w-[842px] flex-col rounded-[20px] border border-[#b9b9b9] bg-[#f4f4f4] shadow-[0_16px_50px_rgba(0,0,0,0.4)]">
      <header className="flex h-[57px] items-center rounded-t-[20px] border-b-2 border-[#b6b6b6] bg-[#e8e8e8] pb-0.5 pl-[15px]">
        <div className="flex w-[200px] gap-4">
          <button aria-label="Close" className="size-6 rounded-full border border-[#b8b8b8] bg-[#cfcfcf]" />
          <button aria-label="Minimize" className="size-6 rounded-full border border-[#b8b8b8] bg-[#cfcfcf]" />
          <button aria-label="Zoom window" className="size-6 rounded-full border border-[#b8b8b8] bg-[#cfcfcf]" />
        </div>
        <h2 className="flex-1 pr-[215px] text-center text-[26px] font-semibold text-[#a6a6a6]">INFO</h2>
      </header>

      <div className="flex h-[74px] items-center pr-[26px] pl-[15px] text-[26px]">
        <svg viewBox="0 0 96 28" className="h-7 w-24 shrink-0" aria-hidden="true">
          <defs>
            <pattern id="dots" width="8" height="8" patternUnits="userSpaceOnUse">
              <rect x="1" y="2" width="2" height="2" fill="#8a9db5" />
              <rect x="5" y="6" width="2" height="2" fill="#fff" />
            </pattern>
          </defs>
          <rect width="96" height="28" fill="url(#dots)" />
        </svg>
        <button className="ml-[22px] flex items-center gap-[10px]">
          <ZoneIcon />
          <span>Spatia...</span>
        </button>
        <button aria-label="Choose component" className="ml-7">
          <svg viewBox="0 0 18 24" className="h-6 w-[18px]" aria-hidden="true"><path d="M0 10 9 0l9 10zM0 14h18L9 24z" /></svg>
        </button>
        <button aria-label="Previous" className="ml-7">
          <Svg box="0 0 14 22" className="h-[22px] w-[14px]" color="#808080" sw={3}><path d="M12 1 2 11l10 10" /></Svg>
        </button>
        <button aria-label="Previous list" className="ml-9"><Caret color="#808080" /></button>
        <button aria-label="Next" className="ml-[34px]">
          <Svg box="0 0 14 22" className="h-[22px] w-[14px]" color="#808080" sw={3}><path d="M2 1l10 10L2 21" /></Svg>
        </button>
        <button aria-label="Next list" className="ml-9"><Caret color="#808080" /></button>
        <span className="ml-auto h-[34px] w-0.5 bg-[#d6d6d6]" />
        <button aria-label="Selected components" className="ml-3 flex h-[44px] w-[44px] items-center justify-center rounded-md border border-[#d2d2d2] bg-gradient-to-br from-[#ececec] to-[#cfcfcf]">
          <Svg box="0 0 30 26" className="h-[26px] w-[30px]" color="#111">
            <path d="M8 1 15 4v8l-7 4-6-4V4zM2 4l6 4 7-4M8 8v8" />
            <path d="M20 7l9 5v8l-9 5-9-5v-8z" fill="#a4f23a" stroke="#5cb800" />
            <path d="M11 12l9 4 9-4M20 16v9" stroke="#5cb800" />
          </Svg>
        </button>
        <span className="ml-2 h-[34px] w-0.5 bg-[#d6d6d6]" />
        <button aria-label="Add to basket" className="ml-5"><Basket kind="add" /></button>
        <button aria-label="Remove from basket" className="ml-4"><Basket kind="remove" /></button>
        <button aria-label="Set basket" className="ml-4"><Basket kind="set" /></button>
        <button aria-label="Maximize" className="ml-[34px]"><PanelIcon /></button>
      </div>

      <div className="relative z-10 mx-auto mt-1 flex h-[46px] overflow-hidden rounded-xl border-2 border-[#dcdcdc] bg-[#e6e6e6] text-[26px]">
        <button className="relative w-[154px] rounded-xl bg-white font-bold shadow-md">
          <span className="absolute top-0 right-4 left-[14px] h-1.5 bg-[#00c878]" />
          BIM Data
        </button>
        <button className="w-[172px] pr-1">Favorites</button>
      </div>

      <div className="mx-[17px] -mt-[19px] mb-6 flex flex-col rounded-xl border border-[#dfdfdf] bg-[#ebebeb] pt-[38px] pr-[18px] pb-[26px] pl-[21px]">
        <div className="relative z-10 mx-1 flex h-[46px] items-center rounded-xl border-2 border-[#d6d6d6] bg-[#dcdcdc] text-left text-[26px]">
          <button className="h-[42px] w-[272px] rounded-xl bg-white pl-4 text-left font-bold shadow-md">Identification</button>
          <button className="w-[214px] border-r-2 border-[#c4c4c4] pl-7 text-left leading-[26px]">Location</button>
          <button className="w-[216px] border-r-2 border-[#c4c4c4] pl-5 text-left leading-[26px]">Relations</button>
          <button aria-label="More tabs" className="ml-[18px]">
            <svg viewBox="0 0 18 20" className="h-5 w-[18px]" aria-hidden="true"><path d="M0 0l18 10L0 20z" /></svg>
          </button>
        </div>
        <div className="-mt-[19px] rounded-xl border border-[#d8d8d8] bg-[#e4e4e4] px-[5px] pt-[33px] pb-[3px]">
          <div className="flex max-h-[1196px] overflow-hidden bg-white">
            <table className="flex-1 table-fixed border-collapse">
              <colgroup>
                <col className="w-[361px]" />
                <col />
              </colgroup>
              <thead>
                <tr className="h-8 text-left align-top text-[22px] leading-[26px]">
                  <th className="border-r-2 border-[#e0e0e0] p-0 pl-1.5 font-normal">Property</th>
                  <th className="border-r-2 border-[#e0e0e0] p-0 pl-1.5 font-normal">Value</th>
                </tr>
              </thead>
              <tbody className="whitespace-nowrap">
                {ROWS.map((r, i) => (
                  <tr key={i} className={i % 2 ? "h-11 bg-[#dfdfdf]" : "h-11 bg-white"}>
                    <td className="border-r-2 border-[#bdbdbd] p-0">
                      {r.group ? (
                        <div className="flex items-center pl-[10px] text-[26px] leading-[40px] font-bold">
                          <button aria-label="Collapse group" className="w-[30px]"><Twisty open /></button>
                          {r.name}
                        </div>
                      ) : (
                        <div className="flex items-center gap-[18px] pl-[88px] text-[26px] leading-[40px]">
                          <Grip />
                          {r.name}
                        </div>
                      )}
                    </td>
                    <td className="border-r-2 border-[#bdbdbd] p-0 pl-0.5 text-[25px] leading-[40px]">{r.value}</td>
                  </tr>
                ))}
              </tbody>
            </table>
            <div className="w-[30px] shrink-0 bg-[#fafafa] pt-[34px]">
              <div className="mx-auto h-[1136px] w-4 rounded-full bg-[#c1c1c1]" />
            </div>
          </div>
        </div>
      </div>
    </section>
  );
}

/* ---------- page ---------- */

export default function App() {
  return (
    <div className="relative flex h-screen flex-col overflow-hidden bg-white font-['Noto_Sans',sans-serif] text-black">
      <div className="h-[74px] shrink-0 bg-black" />
      <NavBar />
      <Toolbar />
      <div className="flex min-h-0 flex-1 flex-col bg-gradient-to-b from-[#f1f1f1] to-[#cacaca]">
        <div className="flex min-h-0 flex-1">
          <div className="flex min-h-0 pt-[29px] pl-7"><ModelTree /></div>
          <main className="relative min-w-0 flex-1">
            <div className="absolute inset-0 -left-0.5"><Scene /></div>
            <div className="relative flex items-center gap-[10px] pt-[46px] pl-[43px] text-[26px] leading-[38px]">
              <HouseCubeIcon />
              3D
            </div>
          </main>
        </div>
        <footer className="flex h-[62px] shrink-0 items-center pt-1 pr-[362px] pl-[41px] text-[27px]">
          <span className="flex-1">Welcome to Solibri Anywhere</span>
          <span>Selected: 0</span>
        </footer>
      </div>
      <MiniMap />
      <InfoWindow />
    </div>
  );
}
